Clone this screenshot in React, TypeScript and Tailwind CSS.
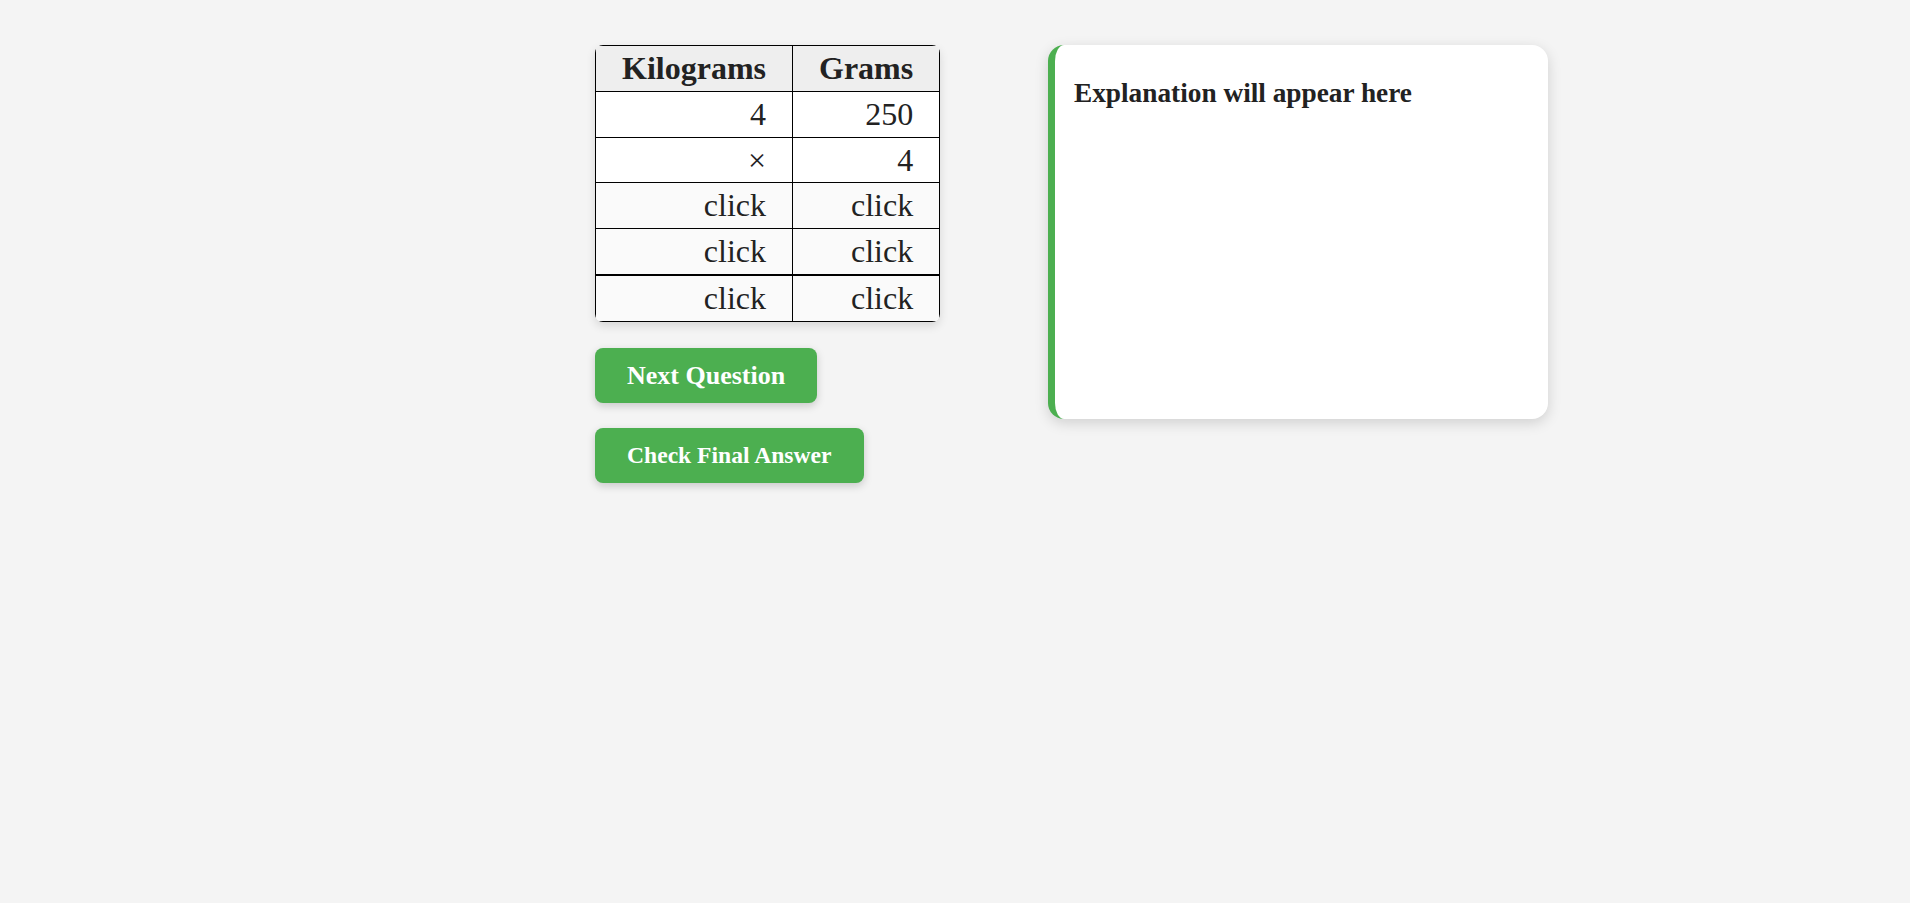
import React from "react";

const serif = { fontFamily: '"Liberation Serif", "Times New Roman", serif' };

export default function App() {
  const rows: { a: string; b: string; bg: string; thick?: boolean }[] = [
    { a: "4", b: "250", bg: "bg-white" },
    { a: "×", b: "4", bg: "bg-white" },
    { a: "click", b: "click", bg: "bg-[#fafafa]" },
    { a: "click", b: "click", bg: "bg-[#fafafa]" },
    { a: "click", b: "click", bg: "bg-[#fafafa]", thick: true },
  ];
  return (
    <div className="min-h-[903px] w-full bg-[#f4f4f4] text-[#222]" style={serif}>
      <div className="flex items-start pl-[595px] pt-[45px]">
        <div className="flex w-[453px] flex-col items-start">
          <div className="overflow-hidden rounded-[8px] shadow-[0_4px_10px_rgba(0,0,0,0.12)]">
            <table className="border-collapse text-[32px] leading-[1.15]">
              <thead>
                <tr className="bg-[#eeeeee]">
                  <th className="border border-black px-[26px] py-[4px] text-center font-bold">Kilograms</th>
                  <th className="border border-black px-[26px] py-[4px] text-center font-bold">Grams</th>
                </tr>
              </thead>
              <tbody>
                {rows.map((r, i) => (
                  <tr key={i} className={r.bg}>
                    <td className={`border border-black px-[26px] py-[4px] text-right ${r.thick ? "border-t-2" : ""}`}>{r.a}</td>
                    <td className={`border border-black px-[26px] py-[4px] text-right ${r.thick ? "border-t-2" : ""}`}>{r.b}</td>
                  </tr>
                ))}
              </tbody>
            </table>
          </div>
          <button className="mt-[26px] flex h-[55px] items-center rounded-[8px] bg-[#4caf50] px-[32px] text-[26px] font-bold text-white shadow-[0_3px_8px_rgba(0,0,0,0.18)]">
            Next Question
          </button>
          <button className="mt-[25px] flex h-[55px] items-center rounded-[8px] bg-[#4caf50] px-[32px] text-[23.6px] font-bold text-white shadow-[0_3px_8px_rgba(0,0,0,0.18)]">
            Check Final Answer
          </button>
        </div>
        <div className="h-[374px] w-[500px] rounded-[16px] border-l-[7px] border-[#4caf50] bg-white pl-[19px] pt-[33px] shadow-[0_4px_14px_rgba(0,0,0,0.15)]">
          <div className="text-[27.3px] font-bold leading-[1.15]">Explanation will appear here</div>
        </div>
      </div>
    </div>
  );
}
